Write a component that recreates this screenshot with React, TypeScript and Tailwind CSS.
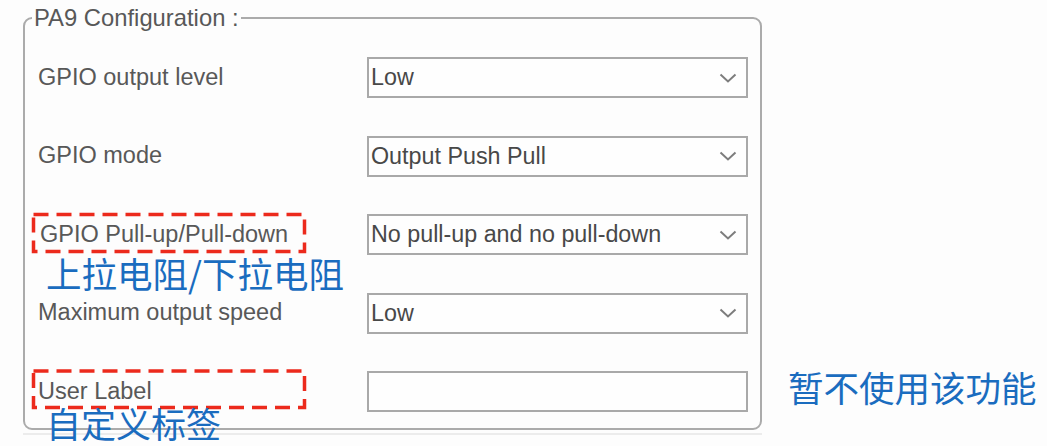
import React from "react";

const rows: { label: string; value: string; select: boolean }[] = [
  { label: "GPIO output level", value: "Low", select: true },
  { label: "GPIO mode", value: "Output Push Pull", select: true },
  { label: "GPIO Pull-up/Pull-down", value: "No pull-up and no pull-down", select: true },
  { label: "Maximum output speed", value: "Low", select: true },
  { label: "User Label", value: "", select: false },
];

function Chevron() {
  return (
    <svg width="18" height="10" viewBox="0 0 18 10" className="shrink-0">
      <path d="M1.5 1.5 L9 8.5 L16.5 1.5" fill="none" stroke="#7d7d7d" strokeWidth="2" />
    </svg>
  );
}

export default function App() {
  return (
    <div
      className="relative w-[1047px] h-[446px] overflow-hidden bg-[#fdfdfd] pt-[4px] pl-[23px]"
      style={{ fontFamily: '"Liberation Sans", Arial, sans-serif' }}
    >
      <fieldset className="w-[739px] border-2 border-[#ababab] rounded-[9px] pl-[7px] pr-[12px] pt-[25px] pb-[16px]">
        <legend className="px-[2px] text-[23.8px] leading-[28px] text-[#585858]">PA9 Configuration :</legend>
        <div className="ml-[6px] grid grid-cols-[329px_381px] gap-y-[37.5px]">
          {rows.map((r) => (
            <React.Fragment key={r.label}>
              <div className={`h-[41px] flex items-center text-[23.5px] text-[#585858] ${r.label.startsWith("GPIO Pull") ? "pl-[2px]" : ""}`}>
                {r.label}
              </div>
              <div className="h-[41px] border-2 border-[#a9a9a9] bg-[#fefefe] flex items-center justify-between pl-[2px] pr-[9px] text-[23.3px] text-[#484848]">
                <span>{r.value}</span>
                {r.select && <Chevron />}
              </div>
            </React.Fragment>
          ))}
        </div>
      </fieldset>
      <div className="mt-[3px] h-[2px] w-[739px] bg-[#ececec]" />

      <svg className="absolute inset-0 pointer-events-none" width="1047" height="446">
        <rect x="33.5" y="214.5" width="271" height="37" fill="none" stroke="#ec2a1c" strokeWidth="3.5" strokeDasharray="15 8" />
        <rect x="33.5" y="371" width="271" height="36.5" fill="none" stroke="#ec2a1c" strokeWidth="3.5" strokeDasharray="15 8" />
      </svg>

      <div
        className="absolute left-[46px] top-[255px] text-[35.5px] leading-[35px] text-[#1a6cbf] whitespace-nowrap"
        style={{ fontFamily: '"Noto Sans CJK SC", sans-serif' }}
      >
        上拉电阻/下拉电阻
      </div>
      <div
        className="absolute left-[46px] top-[405px] text-[35px] leading-[35px] text-[#1a6cbf] whitespace-nowrap"
        style={{ fontFamily: '"Noto Sans CJK SC", sans-serif' }}
      >
        自定义标签
      </div>
      <div
        className="absolute left-[788px] top-[369px] text-[35.5px] leading-[35px] text-[#1a6cbf] whitespace-nowrap"
        style={{ fontFamily: '"Noto Sans CJK SC", sans-serif' }}
      >
        暂不使用该功能
      </div>
    </div>
  );
}
